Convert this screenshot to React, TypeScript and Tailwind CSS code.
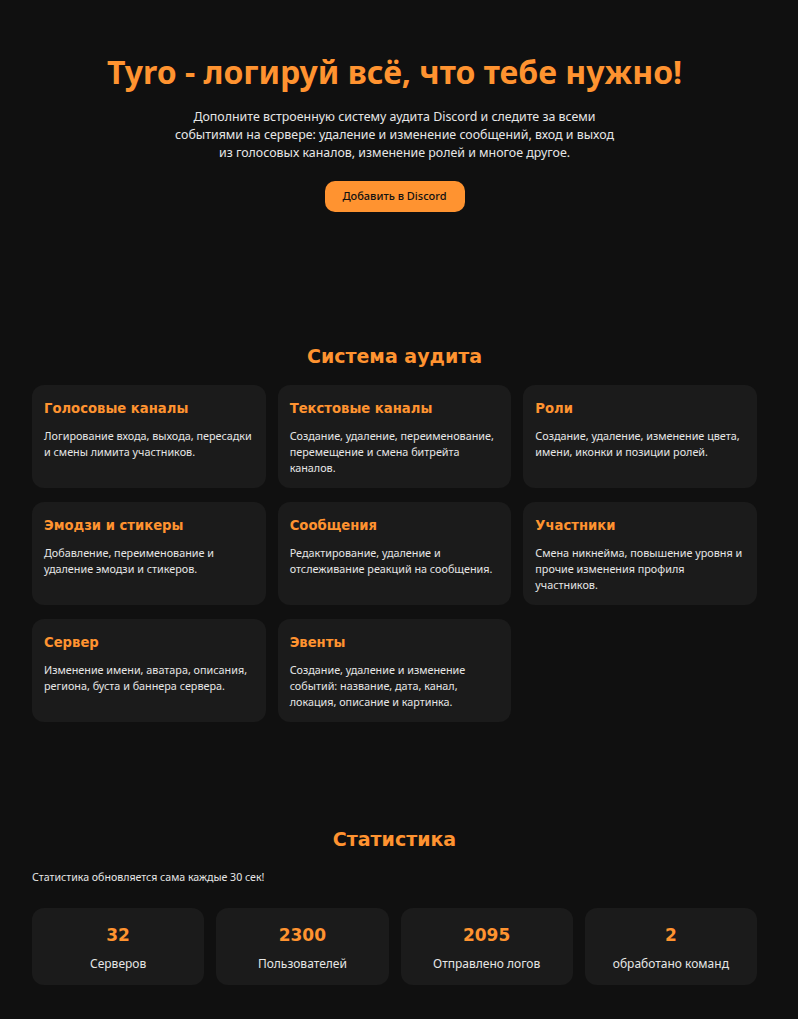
import React from 'react';

const features = [
  { title: 'Голосовые каналы', text: 'Логирование входа, выхода, пересадки и смены лимита участников.' },
  { title: 'Текстовые каналы', text: 'Создание, удаление, переименование, перемещение и смена битрейта каналов.' },
  { title: 'Роли', text: 'Создание, удаление, изменение цвета, имени, иконки и позиции ролей.' },
  { title: 'Эмодзи и стикеры', text: 'Добавление, переименование и удаление эмодзи и стикеров.' },
  { title: 'Сообщения', text: 'Редактирование, удаление и отслеживание реакций на сообщения.' },
  { title: 'Участники', text: 'Смена никнейма, повышение уровня и прочие изменения профиля участников.' },
  { title: 'Сервер', text: 'Изменение имени, аватара, описания, региона, буста и баннера сервера.' },
  { title: 'Эвенты', text: 'Создание, удаление и изменение событий: название, дата, канал, локация, описание и картинка.' },
];

const stats = [
  { value: '32', label: 'Серверов' },
  { value: '2300', label: 'Пользователей' },
  { value: '2095', label: 'Отправлено логов' },
  { value: '2', label: 'обработано команд' },
];

const App: React.FC = () => {
  return (
    <div className="min-h-[1019px] bg-[#101010] pt-[52px] pr-[41px] pb-8 pl-8 font-['DejaVu_Sans',sans-serif] text-[#e8e8e8]">
      {/* hero */}
      <section className="flex flex-col items-center text-center">
        <h1 className="font-['Noto_Sans',sans-serif] text-[32px] leading-[40px] font-bold text-[#ff9330]">
          Tyro - логируй всё, что тебе нужно!
        </h1>
        <p className="mt-[16px] w-[450px] font-['Noto_Sans',sans-serif] text-[12.4px] leading-[18px] text-[#e6e6e6]">
          Дополните встроенную систему аудита Discord и следите за всеми событиями на сервере: удаление и изменение
          сообщений, вход и выход из голосовых каналов, изменение ролей и многое другое.
        </p>
        <button className="mt-[19px] h-[31px] w-[140px] rounded-[10px] bg-[#ff9330] font-['Noto_Sans',sans-serif] text-[11px] font-medium text-[#111]">
          Добавить в Discord
        </button>
      </section>

      {/* audit */}
      <section className="mt-[130px]">
        <h2 className="text-center text-[19px] leading-[28px] font-bold text-[#ff9330]">Система аудита</h2>
        <div className="mt-[15px] grid grid-cols-3 gap-x-3 gap-y-[14px]">
          {features.map((f) => (
            <div key={f.title} className="rounded-[12px] bg-[#1b1b1b] px-3 pt-[15px] pb-3">
              <h3 className="text-[13.2px] leading-[18px] font-bold text-[#ff9330]">{f.title}</h3>
              <p className="mt-[10px] font-['Noto_Sans',sans-serif] text-[10.8px] leading-4 text-[#e6e6e6]">{f.text}</p>
            </div>
          ))}
        </div>
      </section>

      {/* stats */}
      <section className="mt-[103px]">
        <h2 className="text-center text-[19px] leading-[28px] font-bold text-[#ff9330]">Статистика</h2>
        <p className="mt-[17px] font-['Noto_Sans',sans-serif] text-[10.6px] leading-[14px] text-[#e6e6e6]">
          Статистика обновляется сама каждые 30 сек!
        </p>
        <div className="mt-[24px] grid grid-cols-4 gap-3">
          {stats.map((s) => (
            <div key={s.label} className="flex h-[77px] flex-col items-center rounded-[12px] bg-[#1b1b1b] pt-4">
              <div className="text-[17px] leading-[22px] font-bold text-[#ff9330]">{s.value}</div>
              <div className="mt-[10px] font-['Noto_Sans',sans-serif] text-[12px] leading-4 text-[#e6e6e6]">{s.label}</div>
            </div>
          ))}
        </div>
      </section>
    </div>
  );
};

export default App;
